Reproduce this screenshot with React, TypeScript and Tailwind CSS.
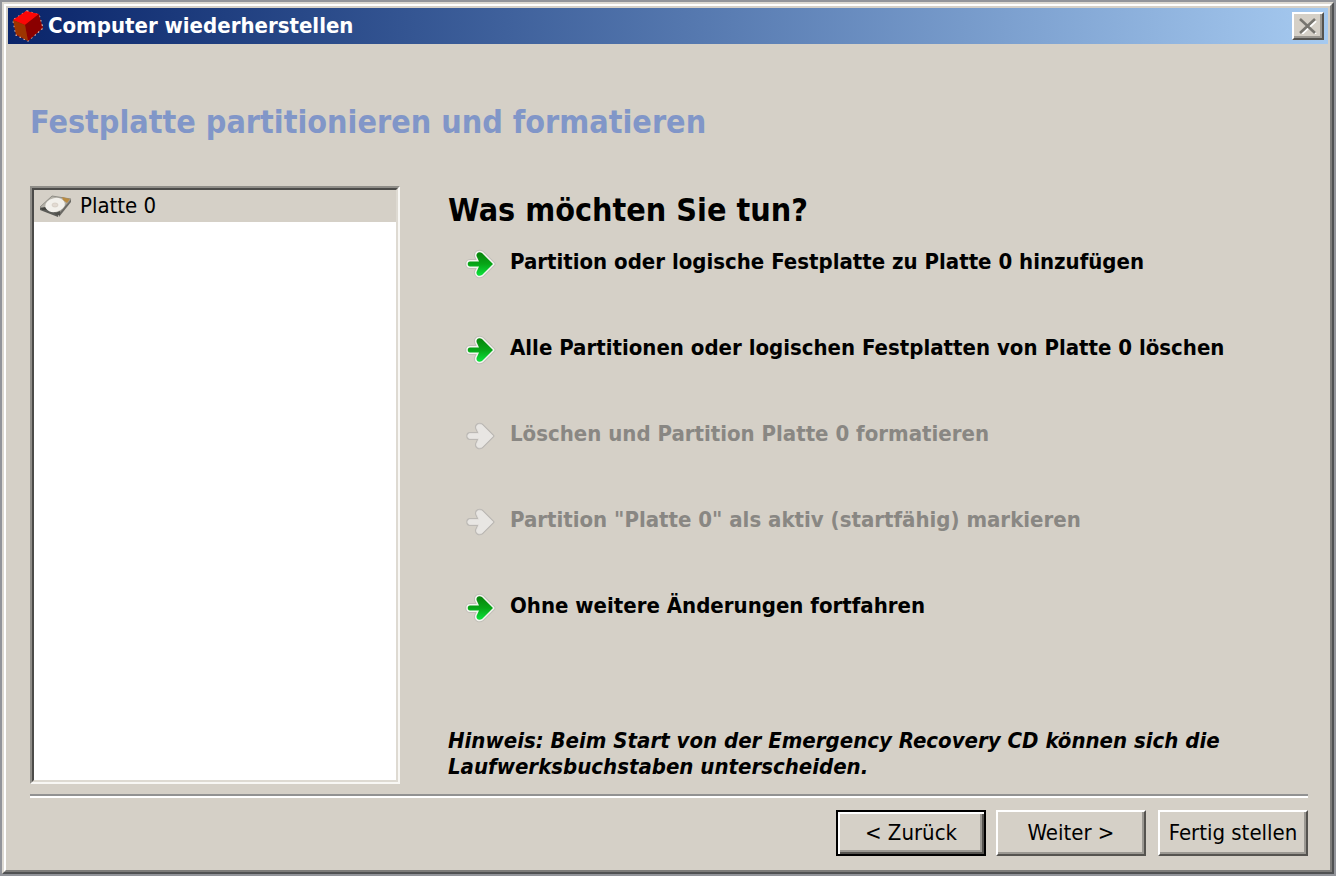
import { useState } from 'react';

interface Action {
  id: string;
  label: string;
  enabled: boolean;
}

const actions: Action[] = [
  { id: 'add', label: 'Partition oder logische Festplatte zu Platte 0 hinzufügen', enabled: true },
  { id: 'delete', label: 'Alle Partitionen oder logischen Festplatten von Platte 0 löschen', enabled: true },
  { id: 'format', label: 'Löschen und Partition Platte 0 formatieren', enabled: false },
  { id: 'active', label: 'Partition "Platte 0" als aktiv (startfähig) markieren', enabled: false },
  { id: 'continue', label: 'Ohne weitere Änderungen fortfahren', enabled: true },
];

const buttonBevel =
  'border-2 border-t-white border-l-white border-r-[#55534f] border-b-[#55534f] shadow-[inset_-2px_-2px_0_#9b9892] bg-[#d5d0c7]';

function CubeIcon() {
  return (
    <svg width="32" height="32" viewBox="0 0 32 32" aria-hidden="true">
      <path d="M15 1 27 5 31 18 16 31 4 25 1 10Z" fill="#a01000" stroke="#e8c8b8" strokeWidth="1.4" strokeDasharray="1.5 3" />
      <path d="M14 1 27 4 13 15 1 10Z" fill="#fb0606" />
      <path d="M27 4 30 18 16 31 13 15Z" fill="#8a0000" />
      <path d="M1 10 13 15 16 31 4 24Z" fill="#9d3500" />
    </svg>
  );
}

function DiskIcon() {
  return (
    <svg width="32" height="24" viewBox="0 0 32 24" aria-hidden="true">
      <path d="M0 13 19 19 18 23 0 16Z" fill="#5b5b57" />
      <path d="M19 18 31 5 31 8 19 23Z" fill="#6b6964" />
      <path d="M0 13 12 2 31 5 19 19Z" fill="#b5b2a9" stroke="#8f8d86" strokeWidth="1" />
      <ellipse cx="15" cy="11" rx="10" ry="7" fill="#f2f0eb" transform="rotate(-12 15 11)" />
      <ellipse cx="15" cy="11" rx="3" ry="2" fill="#e2dad2" stroke="#d3cbc2" strokeWidth="0.8" />
      <path d="M22 3 30 5 27 9 23 6Z" fill="#b98b42" />
      <path d="M1 14 5 13 7 16 2 16Z" fill="#444440" />
      <path d="M15 19 20 17 20 21 16 21Z" fill="#50504c" />
    </svg>
  );
}

function ArrowIcon({ enabled }: { enabled: boolean }) {
  const shape = 'M6 15.5H15L12.5 10C12 7 15 5 18 7L29 18 18 29C15 31 12 29 12.5 26L15 20.5H6C3 20.5 3 15.5 6 15.5Z';
  return (
    <svg width="32" height="32" viewBox="0 0 32 32" className="shrink-0 overflow-visible" aria-hidden="true">
      <defs>
        <linearGradient id="arrowGreen" x1="0" y1="0" x2="0" y2="1">
          <stop offset="0" stopColor="#07830b" />
          <stop offset="0.5" stopColor="#07a517" />
          <stop offset="1" stopColor="#0be33c" />
        </linearGradient>
      </defs>
      <path
        d={shape}
        fill="none"
        stroke={enabled ? '#c2bfb9' : '#bcb9b5'}
        strokeWidth={enabled ? 5 : 3}
        strokeLinejoin="round"
      />
      <path
        d={shape}
        fill={enabled ? 'url(#arrowGreen)' : '#e8e6e3'}
        stroke={enabled ? '#f4f5f0' : '#dcd9d5'}
        strokeWidth={enabled ? 3 : 1}
        strokeLinejoin="round"
        paintOrder="stroke"
      />
    </svg>
  );
}

export default function App() {
  const [selected, setSelected] = useState('platte0');

  return (
    <div className="min-h-screen flex flex-col bg-[#92949a] p-0.5 font-['DejaVu_Sans_Condensed','DejaVu_Sans',sans-serif] text-black">
      {/* Window frame, outer and inner bevel */}
      <div className="grow flex flex-col border-2 border-t-[#dedad3] border-l-[#dedad3] border-r-[#505153] border-b-[#505153]">
        <main className="grow flex flex-col bg-[#d5d0c7] border-2 border-t-white border-l-white border-r-[#7d7c7a] border-b-[#7d7c7a]">
          {/* Title bar */}
          <header className="flex items-center h-9 mt-0.5 mx-0.5 px-1 bg-linear-to-r from-[#0a246a] to-[#a6caf0]">
            <CubeIcon />
            <span className="grow pl-1 text-[22px] leading-7 font-bold text-white">Computer wiederherstellen</span>
            <button aria-label="Schließen" className={`flex items-center justify-center w-8 h-7 ${buttonBevel}`}>
              <svg width="18" height="16" viewBox="0 0 18 16" aria-hidden="true">
                <path d="M3 3 17 16M17 3 3 16" stroke="#ffffff" strokeWidth="2" />
                <path d="M1 1 16 15M16 1 1 15" stroke="#77756f" strokeWidth="2.6" />
              </svg>
            </button>
          </header>

          <div className="grow flex flex-col pl-6 pr-5.5">
            <h1 className="mt-14.5 text-[32px] leading-10 font-bold text-[#8196c8]">Festplatte partitionieren und formatieren</h1>

            <div className="grow flex gap-12 mt-11">
              {/* Disk list */}
              <div className="flex w-[370px] shrink-0 border-2 border-t-[#8f8d88] border-l-[#8f8d88] border-r-[#f8f7f4] border-b-[#f8f7f4]">
                <ul className="grow bg-white border-2 border-t-[#4c4b49] border-l-[#4c4b49] border-r-[#dedad2] border-b-[#dedad2]">
                  <li>
                    <button
                      onClick={() => setSelected('platte0')}
                      className={`flex items-center gap-2 w-full h-8 px-1.5 text-[22px] leading-7 ${selected === 'platte0' ? 'bg-[#d5d0c7]' : 'bg-white'}`}
                    >
                      <DiskIcon />
                      Platte 0
                    </button>
                  </li>
                </ul>
              </div>

              {/* Actions */}
              <section className="grow flex flex-col">
                <h2 className="mt-1 text-[32px] leading-10 font-bold">Was möchten Sie tun?</h2>
                <ul className="flex flex-col gap-13.5 mt-4 pl-4">
                  {actions.map((action) => (
                    <li key={action.id}>
                      <button
                        disabled={!action.enabled}
                        className="flex items-center gap-3.5 text-left text-[22px] leading-7 font-bold disabled:text-[#898783]"
                      >
                        <ArrowIcon enabled={action.enabled} />
                        {action.label}
                      </button>
                    </li>
                  ))}
                </ul>
                <p className="mt-auto mb-1 max-w-[800px] text-[22px] leading-[26px] font-bold italic">
                  Hinweis: Beim Start von der Emergency Recovery CD können sich die Laufwerksbuchstaben unterscheiden.
                </p>
              </section>
            </div>

            <hr className="mt-2.5 border-t-2 border-b-2 border-t-[#929292] border-b-white" />

            <footer className="flex justify-end gap-3 mt-3 mb-3.5 text-[22px] leading-7">
              <div className="flex gap-2.5">
                <button className="w-[150px] h-[46px] border-2 border-black bg-[#d5d0c7] shadow-[inset_2px_2px_0_#fff,inset_-2px_-2px_0_#55534f,inset_-4px_-4px_0_#9b9892]">
                  &lt; Zurück
                </button>
                <button className={`w-[150px] h-[46px] ${buttonBevel}`}>Weiter &gt;</button>
              </div>
              <button className={`w-[150px] h-[46px] whitespace-nowrap ${buttonBevel}`}>Fertig stellen</button>
            </footer>
          </div>
        </main>
      </div>
    </div>
  );
}
